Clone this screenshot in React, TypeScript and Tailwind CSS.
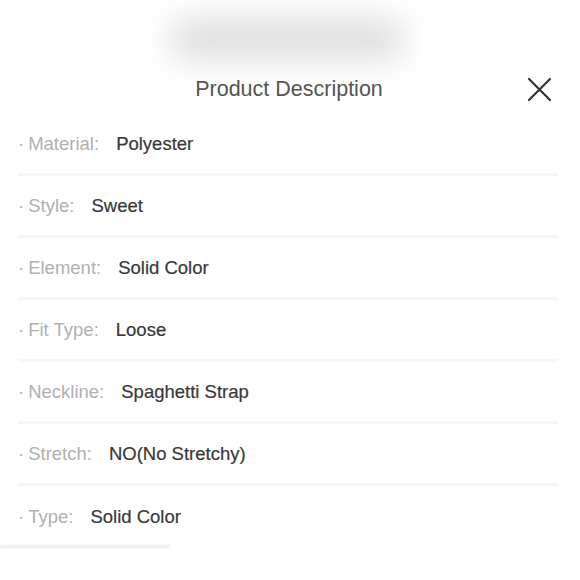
const rows: [string, string][] = [
  ["Material:", "Polyester"],
  ["Style:", "Sweet"],
  ["Element:", "Solid Color"],
  ["Fit Type:", "Loose"],
  ["Neckline:", "Spaghetti Strap"],
  ["Stretch:", "NO(No Stretchy)"],
  ["Type:", "Solid Color"],
];

export default function App() {
  return (
    <div className="w-[580px] h-[580px] bg-white overflow-hidden font-['Liberation_Sans',Arial,sans-serif]">
      {/* blurred top bar */}
      <div className="h-[66px] flex justify-center pt-[18px]">
        <div className="w-[236px] h-[42px] ml-[-6px] rounded-full bg-[#dedede] blur-lg" />
      </div>

      {/* header */}
      <div className="relative h-[46px] flex items-center justify-center">
        <h1 className="text-[21.5px] text-[#555] ml-[-2px]">Product Description</h1>
        <button className="absolute right-[28px] top-[11px] text-[#333]">
          <svg width="25" height="25" viewBox="0 0 25 25" fill="none" stroke="currentColor" strokeWidth="2.2" strokeLinecap="round">
            <path d="M2 2L23 23M23 2L2 23" />
          </svg>
        </button>
      </div>

      {/* rows */}
      <div className="pl-[18px] pr-[22px] mt-[2px]">
        {rows.map(([label, value], i) => (
          <div
            key={label}
            className={`h-[62px] flex items-center text-[18.5px] ${i < rows.length - 1 ? "border-b-[3px] border-[#f7f7f7]" : ""}`}
          >
            <span className="text-[#b0b0b0]">
              <span className="mr-[4px]">·</span>
              {label}
            </span>
            <span className="ml-[17px] text-[#383838] [-webkit-text-stroke:0.2px_#383838]">{value}</span>
          </div>
        ))}
      </div>

      {/* bottom shadow */}
      <div className="mt-[-3px] w-[170px] h-[3px] bg-[#ebebeb] blur-[1px]" />
    </div>
  );
}
